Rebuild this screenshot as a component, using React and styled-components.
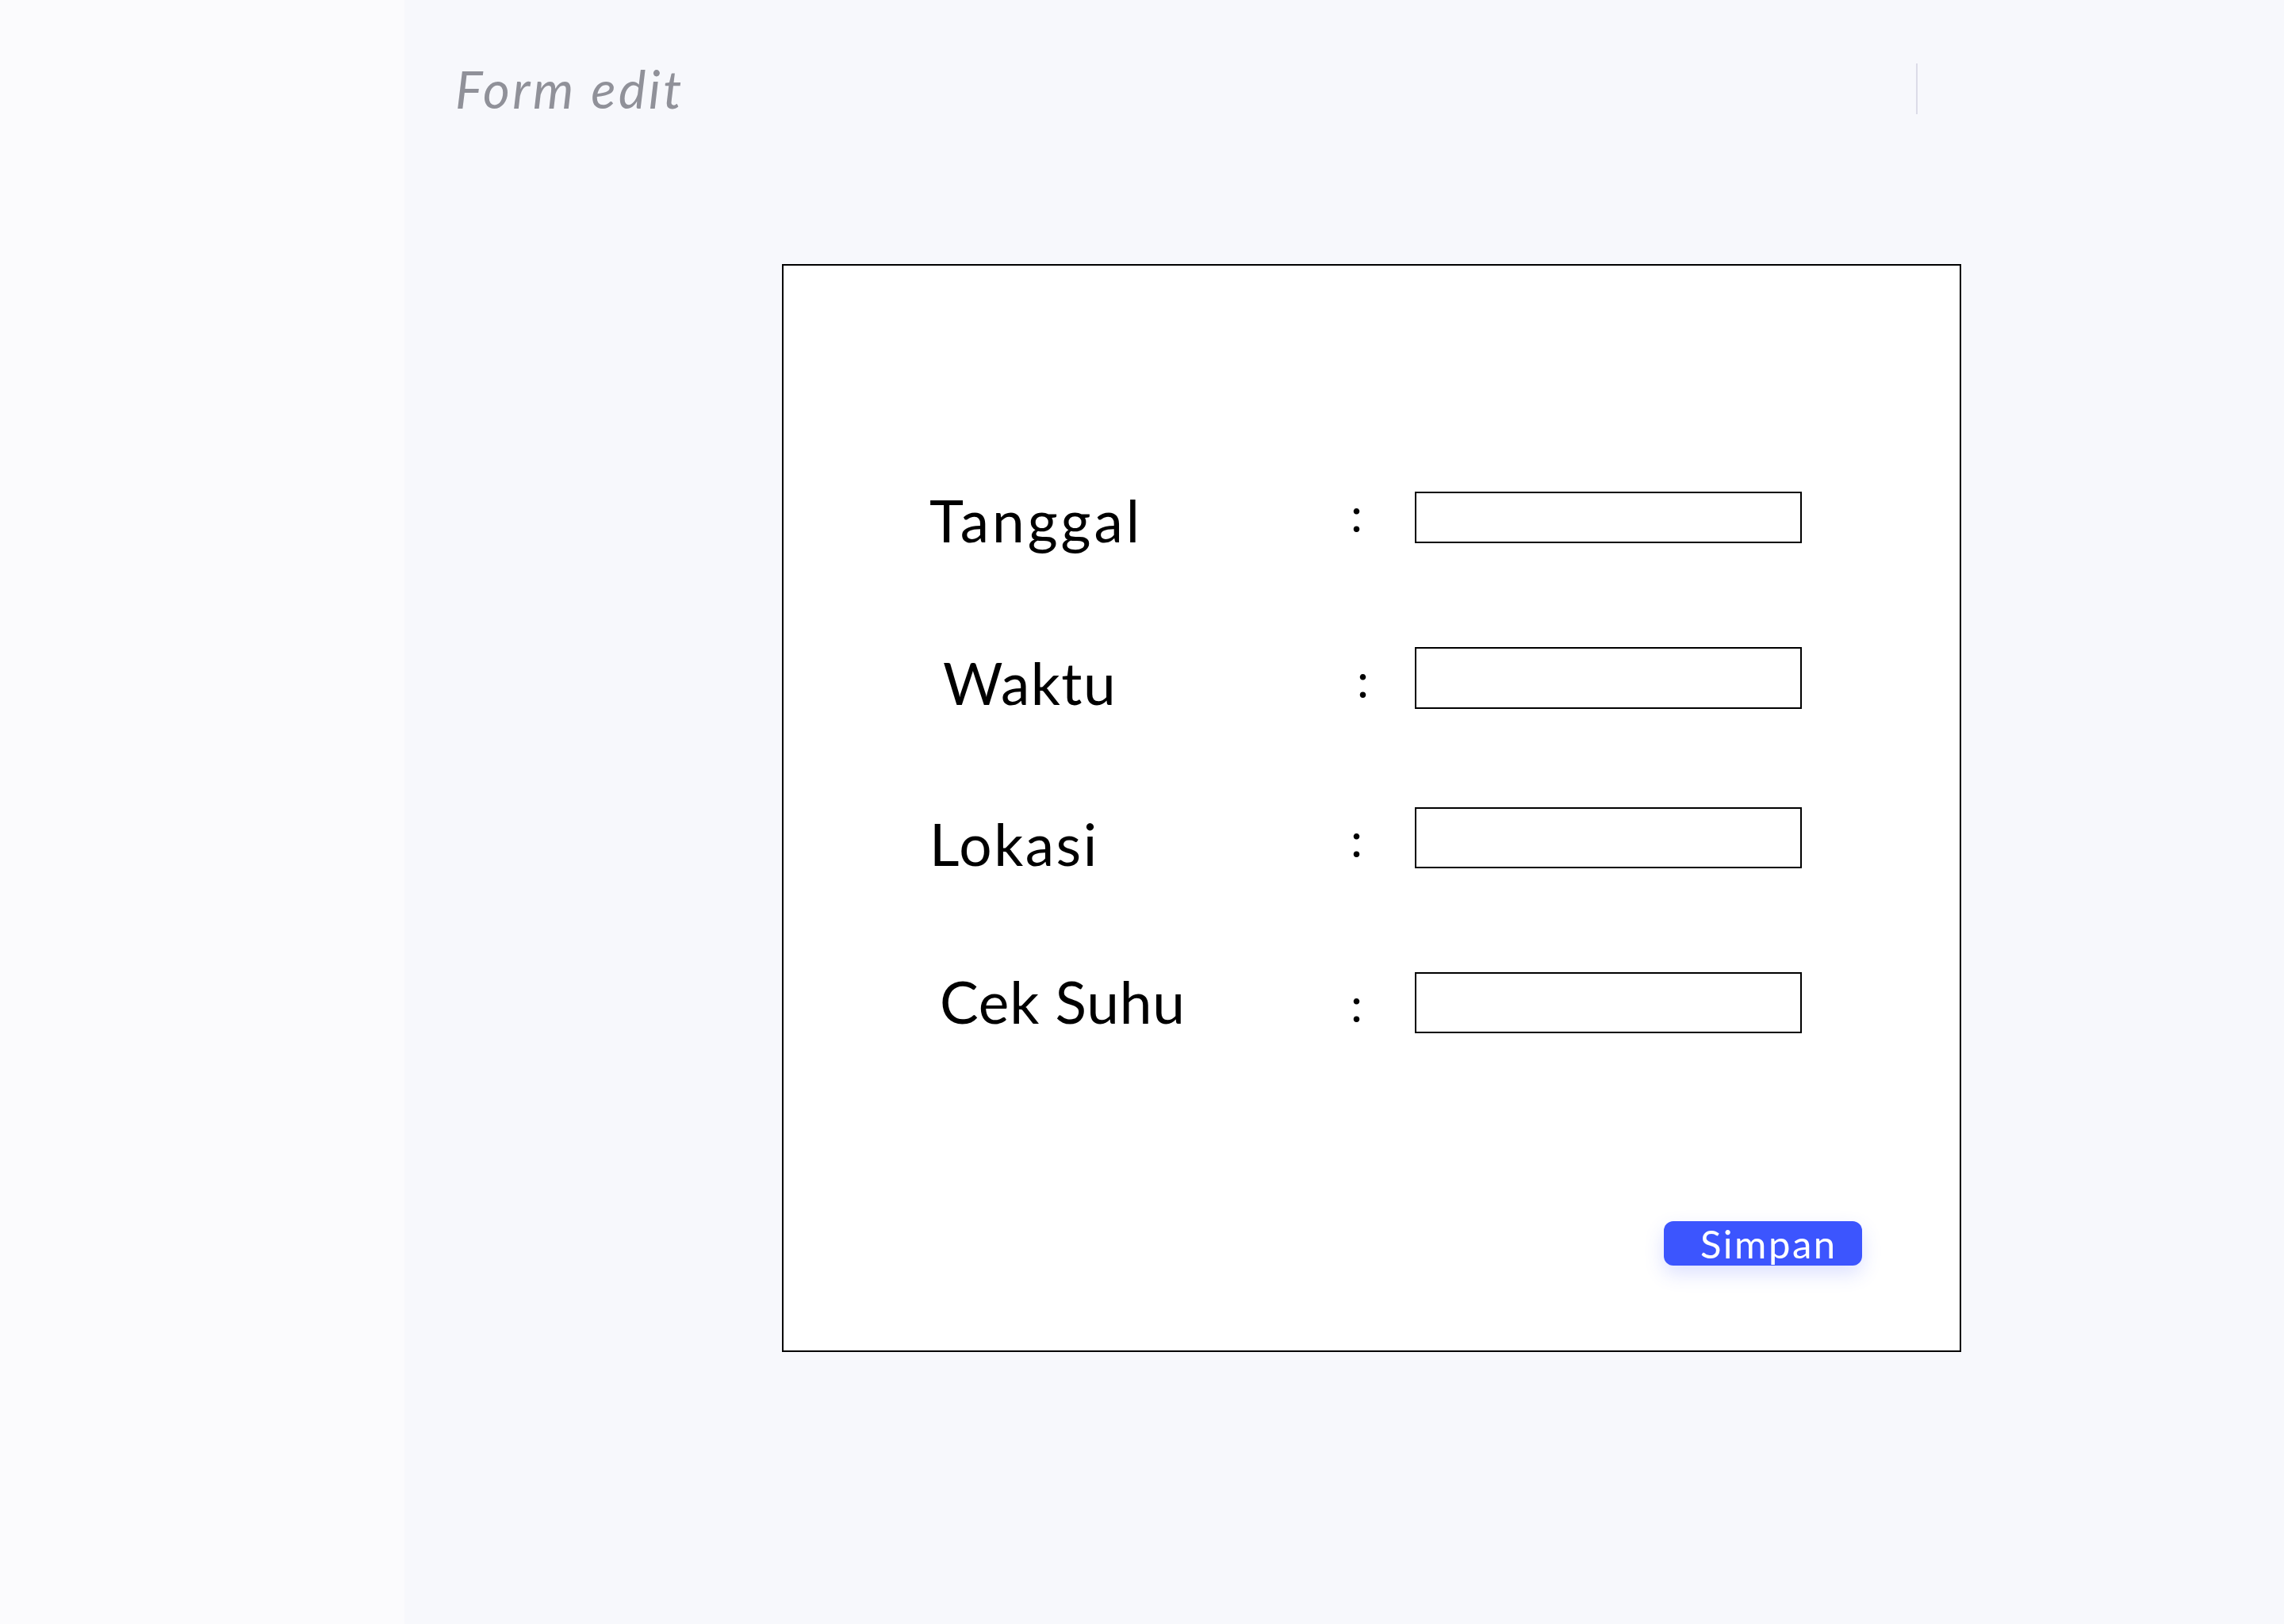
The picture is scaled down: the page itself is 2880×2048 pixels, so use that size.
import React from "react";
import styled, { createGlobalStyle } from "styled-components";

const Global = createGlobalStyle`
  html, body { margin: 0; padding: 0; }
  body { font-family: "Lato", "Noto Sans", sans-serif; background: #f7f8fc; }
  * { box-sizing: border-box; }
`;

const Layout = styled.div`
  display: flex;
  min-height: 2048px;
`;

const Sidebar = styled.aside`
  width: 510px;
  flex: none;
  background: #fbfbfd;
`;

const Main = styled.main`
  flex: 1;
  background: #f7f8fc;
  padding: 80px 0 0 64px;
`;

const Header = styled.header`
  display: flex;
  align-items: center;
  justify-content: space-between;
  height: 64px;
`;

const Title = styled.h1`
  margin: 0;
  font-family: "Lato", sans-serif;
  font-style: italic;
  font-weight: 400;
  font-size: 65px;
  line-height: 64px;
  letter-spacing: 3.5px;
  color: #909199;
`;

const HeaderRight = styled.div`
  display: flex;
  align-items: center;
  width: 464px;
  height: 100%;
`;

const Divider = styled.div`
  width: 2px;
  height: 64px;
  background: #dcdce8;
`;

const Card = styled.form`
  margin: 189px 0 0 412px;
  width: 1487px;
  height: 1372px;
  background: #ffffff;
  border: 2px solid #000;
  padding: 285px 0 0 184px;
  display: flex;
  flex-direction: column;
`;

const Row = styled.div`
  display: grid;
  grid-template-columns: 537px 75px 488px;
  align-items: start;
  height: ${(p) => p.$h}px;
  margin-top: ${(p) => p.$gap}px;
`;

const Label = styled.label`
  font-family: "Lato", sans-serif;
  font-size: 73px;
  line-height: 73px;
  letter-spacing: ${(p) => p.$ls}px;
  color: #000;
  margin-top: ${(p) => p.$dy}px;
  padding-left: ${(p) => p.$dx}px;
  white-space: nowrap;
`;

const Colon = styled.span`
  font-family: "Lato", sans-serif;
  font-size: 60px;
  line-height: 60px;
  color: #000;
  margin-top: ${(p) => p.$dy}px;
  margin-left: ${(p) => p.$dx}px;
`;

const Input = styled.input`
  display: block;
  width: 488px;
  height: ${(p) => p.$h}px;
  border: 2px solid #000;
  border-radius: 0;
  background: #fff;
  outline: none;
  margin: 0;
  padding: 0 12px;
  font-size: 40px;
`;

const Actions = styled.div`
  display: flex;
  justify-content: flex-end;
  margin-top: 237px;
  padding-right: 123px;
`;

const Button = styled.button`
  width: 250px;
  height: 56px;
  border: none;
  border-radius: 12px;
  background: #3c55fe;
  color: #fff;
  font-family: "Lato", sans-serif;
  font-size: 49px;
  line-height: 56px;
  letter-spacing: 2.5px;
  text-align: left;
  padding: 0 0 0 46px;
  box-shadow: 0 10px 24px rgba(60, 85, 254, 0.18);
  cursor: pointer;
`;

const rows = [
  { label: "Tanggal", gap: 0, h: 65, ldy: 0, ldx: 0, ls: 4, cdy: -2, cdx: -6 },
  { label: "Waktu", gap: 131, h: 78, ldy: 9, ldx: 17, ls: 1.5, cdy: 11, cdx: 2 },
  { label: "Lokasi", gap: 124, h: 77, ldy: 10, ldx: -2, ls: 2.5, cdy: 10, cdx: -6 },
  { label: "Cek Suhu", gap: 131, h: 77, ldy: 1, ldx: 13, ls: 0.8, cdy: 10, cdx: -6 },
];

export default function App() {
  return (
    <>
      <Global />
      <Layout>
        <Sidebar />
        <Main>
          <Header>
            <Title>Form edit</Title>
            <HeaderRight>
              <Divider />
            </HeaderRight>
          </Header>
          <Card onSubmit={(e) => e.preventDefault()}>
            {rows.map((r) => (
              <Row key={r.label} $gap={r.gap} $h={r.h}>
                <Label $dy={r.ldy} $dx={r.ldx} $ls={r.ls}>{r.label}</Label>
                <Colon $dy={r.cdy} $dx={r.cdx}>:</Colon>
                <Input type="text" $h={r.h} />
              </Row>
            ))}
            <Actions>
              <Button type="submit">Simpan</Button>
            </Actions>
          </Card>
        </Main>
      </Layout>
    </>
  );
}
